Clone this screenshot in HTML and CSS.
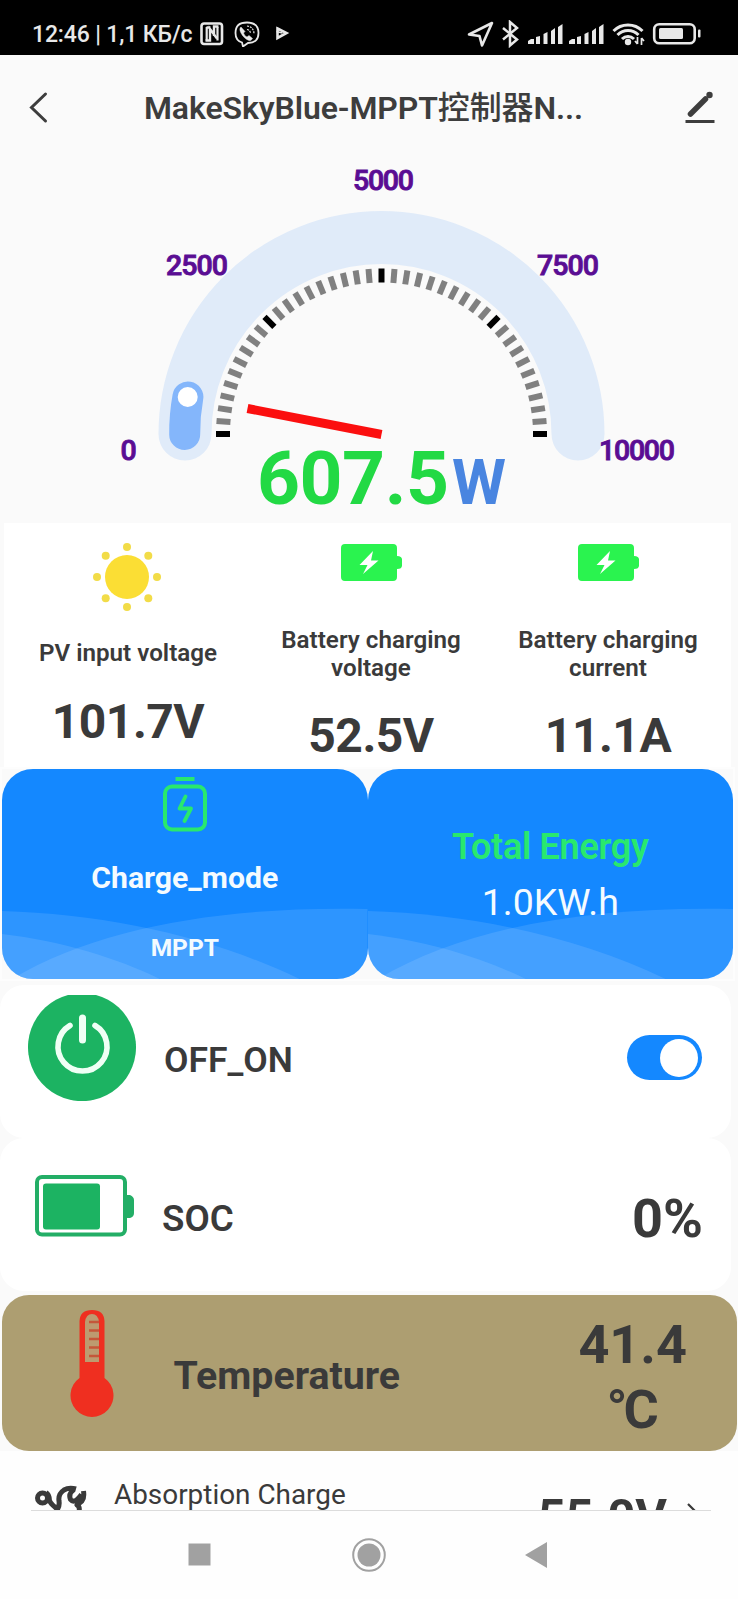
FILE: index.html
```html
<!DOCTYPE html>
<html lang="en">
<head>
<meta charset="utf-8">
<title>MPPT controller</title>
<link rel="stylesheet" href="styles.css">
</head>
<body>
<div class="phone">
  <header class="status">
    <span class="status-text">12:46 | 1,1 КБ/с</span>
    <svg class="status-left" width="92" height="26" viewBox="0 0 92 26" fill="none" stroke="#e8e8e8">
      <rect x="1.500" y="2.500" width="20.500" height="20.500" rx="2.500" stroke-width="2.600"/>
      <path d="M5.500 19.500h4.500V8l7 9.500M6.500 6.500h4M18.500 5.500h-4.500V15" stroke-width="2.400"/>
      <path d="M6.700 6v13.500M17.500 6v13.500" stroke-width="2.200"/>
      <path d="M42 21.500c-5-1.500-6.500-5-6.500-9.500 0-7 4-10.500 11.500-10.500S58.500 5 58.500 12 54.500 22 48 22l-5 3.500z" stroke-width="1.800"/>
      <path d="M41 6c-1.500 1-1.500 3 0 6 2 3.800 5 6.500 8 7.500 1.500.500 3-1 3.500-2l-3.500-3-2 1.500c-2-1-3-2.500-3.500-4l1.500-1.500z" fill="#e8e8e8" stroke-width=".5"/>
      <path d="M47 5c4 .500 7 3 7 8M47 8.500c2 .300 3.500 1.800 3.500 4" stroke-width="1.200" stroke-dasharray="2 1"/>
      <path d="M77.500 7.500l9 4.500-9 5z" stroke-width="2.600"/>
      <path d="M76.500 10.500l6 1.500" stroke-width="1.800"/>
    </svg>
    <svg class="status-right" width="234" height="28" viewBox="0 0 234 28" fill="none" stroke="#e8e8e8">
      <path d="M2 14.500L25 3 15 25.500 12.500 16z" stroke-width="2.600" stroke-linejoin="round"/>
      <path d="M36 8l14 11.500-7 6V2l7 6-14 11.500" stroke-width="2.500"/>
      <g fill="#e8e8e8" stroke="none">
        <path d="M61 24v-3l3-2h3v5zM69 17l4-1v8h-4zM76.500 14l4-2v12h-4zM84 11l4-3v16h-4zM91 7l4.500-3v20H91z"/>
        <path d="M102 24v-3l3-2h3v5zM110 17l4-1v8h-4zM117.500 14l4-2v12h-4zM125 11l4-3v16h-4zM132 7l4.500-3v20H132z"/>
        <circle cx="161" cy="22" r="3.200"/>
        <rect x="192" y="8" width="24" height="11" rx="1.500"/>
        <rect x="231" y="9.500" width="2.500" height="8" rx="1"/>
      </g>
      <path d="M146.500 11c8-8 21-8 29 0M150.500 15c6-6 15-6 21 0M155 19c3.500-3.500 8.500-3.500 12 0" stroke-width="3"/>
      <path d="M170.500 17v7m0 0l-2.500-3M174.500 25v-7m0 0l2.500 3" stroke-width="1.700"/>
      <rect x="187.200" y="4.200" width="40.500" height="19" rx="5" stroke-width="2.600"/>
    </svg>
  </header>

  <nav class="titlebar">
    <svg class="back" width="20" height="34" viewBox="0 0 20 34"><path d="M17.500 3L3.500 16.500l14 13.500" fill="none" stroke="#3d3d3d" stroke-width="3" stroke-linecap="round"/></svg>
    <h1 class="title">MakeSkyBlue-MPPT<span class="cjk">控制器</span>N...</h1>
    <svg class="edit" width="34" height="34" viewBox="0 0 34 34"><path d="M7.500 24L22.500 9" stroke="#3d3d3d" stroke-width="5.500" stroke-linecap="round"/><circle cx="26.500" cy="5" r="3.200" fill="#3d3d3d"/><path d="M2.500 31.500h29" stroke="#3d3d3d" stroke-width="3"/></svg>
  </nav>

  <section class="gauge">
    <svg width="738" height="360" viewBox="0 163 738 360">
      <path d="M185 434a196.500 196.500 0 0 1 393 0" fill="none" stroke="#e0ebf9" stroke-width="53" stroke-linecap="round"/>
      <path d="M184.700 434.500A196.500 196.500 0 0 1 187.900 397" fill="none" stroke="#84b6fb" stroke-width="31" stroke-linecap="round"/>
      <circle cx="187.700" cy="397" r="10" fill="#fff"/>
      <g id="ticks"></g>
      <path d="M247.500 408.500L381.500 434.500" stroke="#fb0f0f" stroke-width="9"/>
      <g class="scale">
        <text x="353" y="189.500" textLength="61">5000</text>
        <text x="166" y="274.700" textLength="62">2500</text>
        <text x="537" y="274.700" textLength="62">7500</text>
        <text x="120.500" y="460.300">0</text>
        <text x="599" y="460.300" textLength="76">10000</text>
      </g>
      <text class="power" x="257" y="504" textLength="192">607.5</text>
      <text class="unit" x="452" y="504" textLength="54" lengthAdjust="spacingAndGlyphs">W</text>
    </svg>
  </section>

  <section class="metrics">
    <div class="metric metric-sun">
      <svg width="70" height="70" viewBox="0 0 70 70" fill="#f2dc48"><circle cx="35" cy="35" r="22" fill="#fbde34"/><circle cx="35" cy="5" r="4"/><circle cx="35" cy="65" r="4"/><circle cx="5" cy="35" r="4"/><circle cx="65" cy="35" r="4"/><circle cx="13.700" cy="13.700" r="4"/><circle cx="56.300" cy="13.700" r="4"/><circle cx="13.700" cy="56.300" r="4"/><circle cx="56.300" cy="56.300" r="4"/></svg>
      <div class="metric-label">PV input voltage</div>
      <div class="metric-value">101.7V</div>
    </div>
    <div class="metric">
      <svg width="61" height="37" viewBox="0 0 61 37"><path d="M4 0h48q4 0 4 4v8q5 0 5 3.500v6q0 3.500-5 3.500v8q0 4-4 4H4q-4 0-4-4V4q0-4 4-4z" fill="#2af34f"/><path d="M32 7L18.500 21h8L22 30 37.500 16.500H30z" fill="#fff"/></svg>
      <div class="metric-label">Battery charging<br>voltage</div>
      <div class="metric-value">52.5V</div>
    </div>
    <div class="metric">
      <svg width="61" height="37" viewBox="0 0 61 37"><path d="M4 0h48q4 0 4 4v8q5 0 5 3.500v6q0 3.500-5 3.500v8q0 4-4 4H4q-4 0-4-4V4q0-4 4-4z" fill="#2af34f"/><path d="M32 7L18.500 21h8L22 30 37.500 16.500H30z" fill="#fff"/></svg>
      <div class="metric-label">Battery charging<br>current</div>
      <div class="metric-value">11.1A</div>
    </div>
  </section>

  <section class="tiles">
    <div class="tile">
      <svg class="waves" viewBox="0 0 366 210" preserveAspectRatio="none"><g fill="#fff" fill-opacity=".11"><path d="M0 142C110 145 215 170 298 210H0z"/><path d="M0 165C60 172 115 189 158 210H0z"/><path d="M10 210C100 156 230 137 366 140V210z"/></g></svg>
      <svg class="mode-icon" width="44" height="56" viewBox="0 0 44 56" fill="none" stroke="#29e86e" stroke-width="4"><path d="M12.500 3h19"/><rect x="2" y="10.500" width="40" height="43" rx="7"/><path d="M22.500 20.500l-6 12h11.500l-6.500 12.500" stroke-width="3.800" stroke-linecap="round" stroke-linejoin="round"/></svg>
      <div class="mode-label">Charge_mode</div>
      <div class="mode-value">MPPT</div>
    </div>
    <div class="tile">
      <svg class="waves" viewBox="0 0 366 210" preserveAspectRatio="none"><g fill="#fff" fill-opacity=".11"><path d="M0 142C110 145 215 170 298 210H0z"/><path d="M0 165C60 172 115 189 158 210H0z"/><path d="M10 210C100 156 230 137 366 140V210z"/></g></svg>
      <div class="energy-label">Total Energy</div>
      <div class="energy-value">1.0KW.h</div>
    </div>
  </section>

  <section class="row row-power">
    <svg width="108" height="108" viewBox="0 0 108 108"><path d="M40 2h28A54 54 0 1 1 40 2z" fill="#1cb362"/><g fill="none" stroke="#effff5" stroke-linecap="round"><path d="M42 32.500a24.500 24.500 0 1 0 25 0" stroke-width="5.600"/><path d="M54.500 25v22" stroke-width="7"/></g></svg>
    <div class="row-label">OFF_ON</div>
    <div class="toggle"><span class="knob"></span></div>
  </section>

  <section class="row row-soc">
    <svg width="100" height="62" viewBox="0 0 100 62"><rect x="2" y="2" width="88" height="57.500" rx="5" fill="none" stroke="#23ae66" stroke-width="4"/><rect x="8" y="8.500" width="57" height="46" rx="3" fill="#1cb362"/><path d="M91 20h4q4 2 4 5v13q0 4-4 5h-4z" fill="#23ae66"/></svg>
    <div class="row-label">SOC</div>
    <div class="row-value">0%</div>
  </section>

  <section class="row row-temp">
    <svg width="44" height="108" viewBox="0 0 44 108"><path d="M9.500 11Q10 0 22 0t12.500 11v57A21.500 21.500 0 1 1 9.500 68z" fill="#ef2f20"/><path d="M15 12q1-8 7-8t7 8v40H15z" fill="#bd9b70"/><path d="M19 12h10M19 20.500h10M19 29h10M19 37.500h10M19 46h10" stroke="#c4583a" stroke-width="2.400"/></svg>
    <div class="row-label">Temperature</div>
    <div class="row-value">41.4<br><span class="degree">°</span>C</div>
  </section>

  <section class="row row-absorb">
    <svg width="54" height="52" viewBox="0 0 54 52" fill="none" stroke="#3a3a3a" stroke-width="5" stroke-linejoin="round"><circle cx="8.500" cy="14" r="5"/><path d="M12 8.500q3.500 3 3.500 8 1 3 6 7 3 3 3 14M22 27q4-4 3-10-1-7 5-11 5-3 12-1M40 5.500q-6 4-3.500 10 4 5 11-5M49.500 7q1 7-1.500 10l-5 4q4 2 1 10"/></svg>
    <div class="absorb-label">Absorption Charge</div>
    <div class="absorb-value">55.0V</div>
    <svg class="chevron" width="16" height="28" viewBox="0 0 16 28"><path d="M3 2l10 10L3 22" fill="none" stroke="#3a3a3a" stroke-width="2.200"/></svg>
  </section>

  <footer class="navbar">
    <div class="rule"></div>
    <svg width="738" height="88" viewBox="0 1511 738 88" fill="#a1a1a1"><rect x="188.500" y="1543.500" width="22" height="22"/><circle cx="369" cy="1555" r="11.500"/><circle cx="369" cy="1555" r="15.800" fill="none" stroke="#a1a1a1" stroke-width="2"/><path d="M525 1555l22-13v26z"/></svg>
  </footer>
</div>
<script src="gauge.js"></script>
</body>
</html>
```

FILE: styles.css
```css
* { box-sizing: border-box; }
body {
  margin: 0;
  background: #fafafa;
  color: #3a3a3a;
  font-family: Roboto, "Noto Sans CJK SC", sans-serif;
}
svg { display: block; flex: none; }
.phone { width: 738px; height: 1599px; overflow: hidden; display: flex; flex-direction: column; }
.phone > * { flex: none; }

.status { height: 55px; background: #000; display: flex; align-items: flex-start; padding: 20px 36px 0 32px; }
.status-text { width: 168px; font-size: 23px; line-height: 30px; font-weight: 500; letter-spacing: -.15px; color: #e8e8e8; white-space: nowrap; }
.status-left { margin-top: 1px; }
.status-right { margin: 0 1px 0 auto; }

.titlebar { height: 108px; display: flex; align-items: flex-start; padding: 34px 21px 0 28px; }
.back { margin-top: 2px; }
.title { margin: 0; flex: 1; padding-right: 4px; text-align: center; font-size: 32px; line-height: 38px; font-weight: 600; letter-spacing: -.1px; color: #3d3d3d; white-space: nowrap; }
.cjk { font-weight: 500; }
.edit { margin-top: 1px; }

.gauge { height: 360px; }
.scale text { font-size: 28.500px; font-weight: 500; fill: #5a0d93; stroke: #5a0d93; stroke-width: .9px; }
.power { font-size: 75px; font-weight: 700; fill: #22d944; }
.unit { font-size: 63px; font-weight: 700; fill: #4985e0; }

.metrics { margin-left: 4px; width: 727px; height: 246px; background: #fff; display: grid; grid-template-columns: 249px 236px 238px; }
.metric { padding-top: 21px; display: flex; flex-direction: column; align-items: center; }
.metric-label { margin-top: 44.500px; font-size: 24.200px; line-height: 28px; font-weight: 600; text-align: center; white-space: nowrap; }
.metric-value { margin-top: 26.500px; font-size: 48px; line-height: 56px; font-weight: 700; letter-spacing: -.5px; }
.metric-sun { padding: 19px 1px 0 0; }
.metric-sun svg { margin-right: 2px; }
.metric-sun .metric-label { margin-top: 27px; }

.tiles { width: 731px; height: 210px; margin-left: 2px; display: grid; grid-template-columns: 1fr 1fr; box-shadow: 0 0 0 2px #fdfdfd; }
.tile { position: relative; overflow: hidden; border-radius: 31px; background: #1488ff; display: flex; flex-direction: column; align-items: center; }
.waves { position: absolute; inset: 0; width: 100%; height: 100%; }
.tile > div, .mode-icon { position: relative; }
.mode-icon { margin-top: 7px; }
.mode-label { margin-top: 28px; font-size: 30.200px; line-height: 36px; font-weight: 700; color: #f4fbff; }
.mode-value { margin-top: 38px; font-size: 24.500px; line-height: 28px; font-weight: 700; color: #f4fbff; }
.energy-label { margin-top: 57px; font-size: 36px; line-height: 42px; font-weight: 600; letter-spacing: -.3px; color: #29e86e; }
.energy-value { margin-top: 12px; font-size: 37.500px; line-height: 44px; color: #f4fbff; }

.row { display: flex; align-items: flex-start; background: #fff; }
.row-label { font-weight: 600; }
.row-value { margin-left: auto; font-weight: 700; font-size: 54px; line-height: 64px; text-align: center; }

.row-power { width: 731px; height: 153px; margin-top: 6px; padding: 8px 29px 0 27.500px; border-radius: 24px; }
.row-power .row-label { margin: 45.500px 0 0 28.500px; font-size: 35.500px; line-height: 42px; }
.toggle { margin: 42px 0 0 auto; width: 75px; height: 45px; border-radius: 23px; background: #1488ff; display: flex; justify-content: flex-end; align-items: center; padding-right: 4px; }
.knob { width: 38px; height: 38px; border-radius: 50%; background: #fff; }

.row-soc { width: 731px; height: 153px; padding: 37px 28px 0 35px; border-radius: 24px; }
.row-soc .row-label { margin: 22.500px 0 0 27px; font-size: 36.700px; line-height: 42px; }
.row-soc .row-value { margin-top: 12px; }

.row-temp { margin: 4px 1px 0 2px; height: 156px; padding: 15px 50px 0 67.500px; border-radius: 27px; background: #ad9e71; }
.row-temp .row-label { margin: 43px 0 0 60px; font-size: 39.300px; line-height: 46px; font-weight: 700; }
.row-temp .row-value { margin-top: 2px; line-height: 65px; }
.degree { font-weight: 700; letter-spacing: -4px; }

.row-absorb { height: 59px; overflow: hidden; padding: 33px 37px 0 34px; background: #fefefe; }
.absorb-label { margin: -6px 0 0 26px; font-size: 27.900px; line-height: 34px; }
.absorb-value { margin: 4.500px 18px 0 auto; font-size: 48.500px; line-height: 56px; font-weight: 700; }
.chevron { margin-top: 18px; }

.navbar { height: 89px; background: #fefefe; }
.rule { height: 1px; margin: 0 27px 0 31px; background: #dcdcdc; }
```

FILE: gauge.js
```js
// Draws the 41 dial ticks, one every 4.5 degrees, with each tenth tick black.
const ticks = document.getElementById("ticks");
for (let i = 0; i <= 40; i++) {
  const line = document.createElementNS("http://www.w3.org/2000/svg", "line");
  line.setAttribute("x1", 216);
  line.setAttribute("x2", 230);
  line.setAttribute("y1", 434);
  line.setAttribute("y2", 434);
  line.setAttribute("stroke-width", 6);
  line.setAttribute("stroke", i % 10 === 0 ? "#000" : "#808080");
  line.setAttribute("transform", `rotate(${i * 4.5} 381.5 434)`);
  ticks.appendChild(line);
}
```
